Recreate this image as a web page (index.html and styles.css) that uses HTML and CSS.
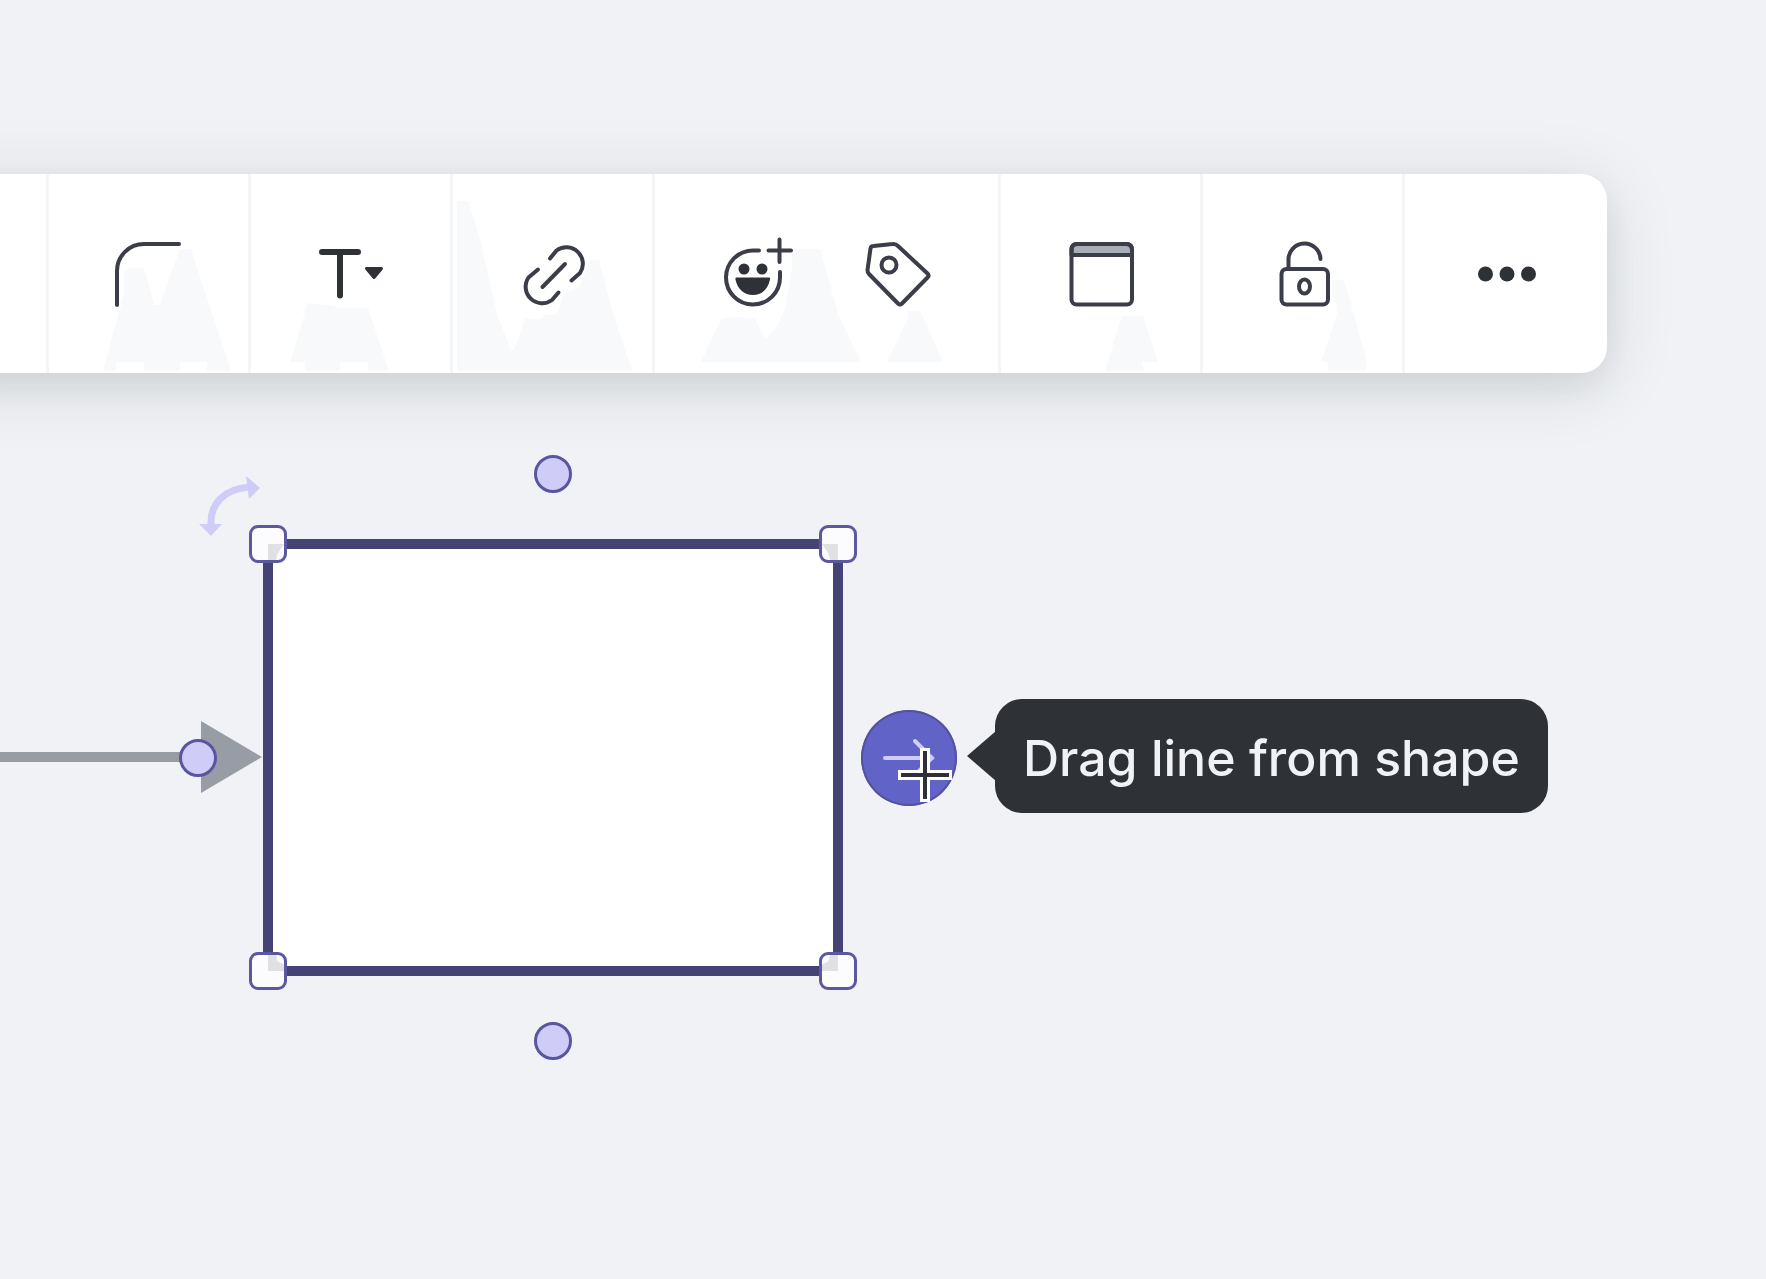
FILE: index.html
```html
<!DOCTYPE html>
<html lang="en">
<head>
    <meta charset="UTF-8">
    <meta name="viewport" content="width=device-width, initial-scale=1.0">
    <title>Drag line from shape</title>
    <link rel="stylesheet" href="styles.css">
</head>
<body>
    <div class="toolbar" role="toolbar" aria-label="Shape options">
        <svg class="toolbar-backdrop" width="1400" height="199" viewBox="0 0 1400 199" aria-hidden="true">
            <path d="M103 197L124 120V98L130 94H144L154 131H160L180 75H191L231 197H207V188H180V197H144V188H116V197Z"/>
            <path d="M290 188L308 129L335 132L336 134H368L389 197H368V188H340V197H305V188Z"/>
            <path d="M457 197V27H468L480 65L497 140L511 176H514L525 145H541L544 141H556L564 120L580 112L590 86H599L613 140L632 197Z"/>
            <path d="M701 188L721 145L737 143L755 145L766 166L778 150L785 135L792 95V75H820L838 140L861 188Z"/>
            <path d="M887 188L908 144V137H920L943 188Z"/>
            <path d="M1105 197L1121 145V142H1143L1158 188H1142L1144 197Z"/>
            <path d="M1321 188L1337 140V133L1332 120V106H1344L1367 188L1365 197H1328V188Z"/>
        </svg>

        <div class="group group-cut"></div>
        <div class="group">
            <button class="tool" type="button" aria-label="Corner radius">
                <svg class="icon" viewBox="0 0 80 80"><path d="M8 71V37A27 27 0 0 1 35 10H70"/></svg>
            </button>
        </div>
        <div class="group">
            <button class="tool" type="button" aria-label="Text">
                <svg class="icon" viewBox="0 0 80 80">
                    <path class="thick" d="M11 18H47M29 18V61.500"/>
                    <path class="solid" d="M55.500 34.500H70.500L63 43.500Z"/>
                </svg>
            </button>
        </div>
        <div class="group">
            <button class="tool" type="button" aria-label="Link">
                <svg class="icon" viewBox="0 0 80 80">
                    <path d="M37 24.500L43.500 16.500A16.500 16.500 0 0 1 67 39L58.500 46.500"/>
                    <path d="M29.500 53L52 30"/>
                    <path d="M45.500 58.500L39 66A16.500 16.500 0 0 1 15.500 43.500L25 35.500"/>
                </svg>
            </button>
        </div>
        <div class="group group-wide">
            <button class="tool" type="button" aria-label="Add emoji">
                <svg class="icon" viewBox="0 0 80 80">
                    <path d="M43 16.500H37A27 27 0 1 0 64 43.500V38"/>
                    <path d="M52.500 16.500H75M63.500 5.500V28"/>
                    <circle class="fill" cx="28" cy="35" r="5.500"/>
                    <circle class="fill" cx="46" cy="35" r="5.500"/>
                    <path class="fill" d="M20.500 43.500H53Q54.500 43.500 54 45.500C52 55.500 45.500 61 37 61S21.500 55.500 19.500 45.500Q19 43.500 20.500 43.500Z"/>
                </svg>
            </button>
            <button class="tool" type="button" aria-label="Tags">
                <svg class="icon" viewBox="0 0 80 80">
                    <path d="M15.500 12L34.500 10Q37.500 9.500 40 12L69.500 39.500Q71.500 41.500 69.500 43.500L44 69.500Q42 71.500 40 69.500L11 40Q9.500 38.500 9.500 36L12.500 14.500Q13 12 15.500 12Z"/>
                    <circle cx="31" cy="31" r="7.500"/>
                </svg>
            </button>
        </div>
        <div class="group">
            <button class="tool" type="button" aria-label="Container">
                <svg class="icon" viewBox="0 0 80 80">
                    <path class="header" d="M10.500 21V16Q10.500 10 16.500 10H65Q71 10 71 16V21Z"/>
                    <rect x="10.500" y="10" width="60.500" height="60.500" rx="5"/>
                </svg>
            </button>
        </div>
        <div class="group">
            <button class="tool" type="button" aria-label="Unlock">
                <svg class="icon" viewBox="0 0 80 80">
                    <path d="M25.500 35V26A16 16 0 0 1 57.500 25"/>
                    <rect x="18.500" y="35" width="46.500" height="35.500" rx="5"/>
                    <ellipse cx="41.500" cy="52.500" rx="5.500" ry="7"/>
                </svg>
            </button>
        </div>
        <div class="group">
            <button class="tool" type="button" aria-label="More">
                <svg class="icon" viewBox="0 0 80 80">
                    <circle class="fill" cx="19.500" cy="40" r="7.500"/>
                    <circle class="fill" cx="41" cy="40" r="7.500"/>
                    <circle class="fill" cx="62.500" cy="40" r="7.500"/>
                </svg>
            </button>
        </div>
    </div>

    <div class="canvas">
        <svg class="connector" width="263" height="80" viewBox="0 0 263 80" aria-hidden="true">
            <path d="M0 35H201V4L262 40L201 76V45H0Z"/>
        </svg>

        <div class="shape">
            <svg class="rotate" width="70" height="70" viewBox="0 0 70 70" aria-hidden="true">
                <path class="rotate-arc" d="M16 54C15 32 30 18 54 16"/>
                <path class="rotate-head" d="M51 5L65 17L54 28Z"/>
                <path class="rotate-head" d="M4 53H27L16 65Z"/>
            </svg>

            <span class="handle top-left"></span>
            <span class="handle top-right"></span>
            <span class="handle bottom-left"></span>
            <span class="handle bottom-right"></span>

            <span class="anchor anchor-top"></span>
            <span class="anchor anchor-bottom"></span>
            <span class="anchor anchor-left"></span>

            <button class="connect" type="button" aria-label="Drag line" aria-describedby="connect-tip">
                <svg width="96" height="96" viewBox="0 0 96 96">
                    <path d="M24 48H71M54 31L71 48L54 65"/>
                </svg>
            </button>
            <div class="tooltip" id="connect-tip" role="tooltip">Drag line from shape</div>

            <svg class="cursor" width="58" height="58" viewBox="0 0 58 58" aria-hidden="true">
                <path class="cursor-edge" d="M2 29H56M29 2V56"/>
                <path class="cursor-line" d="M5 29H53M29 5V53"/>
            </svg>
        </div>
    </div>
</body>
</html>
```

FILE: styles.css
```css
body {
    margin: 0;
    min-height: 100vh;
    display: flex;
    flex-direction: column;
    background-color: #f0f2f5;
    font-family: Inter, 'Open Sans', sans-serif;
    overflow: hidden;
}
button {
    padding: 0;
    border: none;
    background: none;
    cursor: pointer;
}

/* toolbar, runs off the left edge of the window */
.toolbar {
    position: relative;
    display: flex;
    height: 199px;
    margin: 174px 159px 0 -80px;
    padding-left: 80px;
    background-color: #fff;
    border-radius: 26px;
    box-shadow: 0 14px 32px rgba(45, 70, 60, 0.08), 0 12px 72px rgba(45, 50, 50, 0.12);
}
.toolbar-backdrop {
    position: absolute;
    top: 0;
    left: 80px;
    fill: #f8f9fb;
}
.group {
    position: relative;
    display: flex;
    flex: none;
    justify-content: center;
    width: 202px;
    box-sizing: border-box;
    border-right: 3px solid #f4f5f7;
}
.group:last-child {
    border-right: none;
}
.group-cut {
    flex: 1;
    width: auto;
}
.group-wide {
    width: 346px;
}
.tool {
    display: flex;
    align-items: center;
    justify-content: center;
    width: 142px;
}
.icon {
    width: 80px;
    height: 80px;
    fill: none;
    stroke: #3b3e48;
    stroke-width: 4;
    stroke-linecap: round;
    stroke-linejoin: round;
}
.icon .thick {
    stroke: #2e3236;
    stroke-width: 6;
}
.icon .solid {
    fill: #2e3236;
    stroke: #2e3236;
    stroke-width: 3;
}
.icon .fill {
    fill: #2e3236;
    stroke: none;
}
.icon .header {
    fill: #a9adb6;
}

/* canvas */
.canvas {
    position: relative;
    flex: 1;
}
.connector {
    position: absolute;
    top: 344px;
    left: 0;
    fill: #989da5;
}
.shape {
    position: absolute;
    top: 166px;
    left: 263px;
    width: 580px;
    height: 437px;
    box-sizing: border-box;
    border: 10px solid #454376;
    background-color: #fff;
}
.rotate {
    position: absolute;
    top: -78px;
    left: -78px;
}
.rotate-arc {
    fill: none;
    stroke: #cfcdf7;
    stroke-width: 7;
}
.rotate-head {
    fill: #cfcdf7;
}
.handle {
    position: absolute;
    width: 38px;
    height: 38px;
    box-sizing: border-box;
    border: 3px solid #5b58a0;
    border-radius: 9px;
    background-color: #fcfcff;
}
/* faint trace of the shape's corner under each handle */
.handle::after {
    content: '';
    position: absolute;
    width: 16px;
    height: 16px;
    background-color: #dfe1e5;
}
.top-left {
    top: -24px;
    left: -24px;
}
.top-left::after {
    right: 0;
    bottom: 0;
    clip-path: polygon(0 0, 100% 0, 60% 60%, 50% 100%, 0 100%);
}
.top-right {
    top: -24px;
    right: -24px;
}
.top-right::after {
    left: 0;
    bottom: 0;
    clip-path: polygon(0 0, 100% 0, 100% 100%, 50% 100%, 40% 60%);
}
.bottom-left {
    bottom: -24px;
    left: -24px;
}
.bottom-left::after {
    top: 0;
    right: 0;
    clip-path: polygon(0 0, 50% 0, 60% 40%, 100% 60%, 100% 100%, 0 100%);
}
.bottom-right {
    right: -24px;
    bottom: -24px;
}
.bottom-right::after {
    top: 0;
    left: 0;
    clip-path: polygon(50% 0, 100% 0, 100% 100%, 0 100%, 0 60%, 40% 40%);
}
.anchor {
    position: absolute;
    width: 38px;
    height: 38px;
    box-sizing: border-box;
    border: 3px solid #5955a3;
    border-radius: 50%;
    background-color: #cfcdf7;
}
.anchor-top {
    top: -94px;
    left: calc(50% - 19px);
}
.anchor-bottom {
    bottom: -94px;
    left: calc(50% - 19px);
}
.anchor-left {
    top: calc(50% - 19px);
    left: -94px;
}
.connect {
    position: absolute;
    top: calc(50% - 48px);
    right: -124px;
    width: 96px;
    height: 96px;
    border-radius: 50%;
    background-color: #6164c6;
    box-shadow: inset 0 0 0 2px #5452a0;
}
.connect svg {
    display: block;
    fill: none;
    stroke: #cfcdf7;
    stroke-width: 4;
    stroke-linecap: round;
}
.tooltip {
    position: absolute;
    top: calc(50% - 59px);
    left: calc(100% + 162px);
    padding: 28px 28px 24px;
    border-radius: 27px;
    background-color: #2e3236;
    color: #f0f2f5;
    font-size: 50px;
    font-weight: 500;
    line-height: 62px;
    white-space: nowrap;
}
.tooltip::before {
    content: '';
    position: absolute;
    top: 32px;
    left: -28px;
    border: 25px solid transparent;
    border-right: 29px solid #2e3236;
    border-left: none;
}
.cursor {
    position: absolute;
    top: calc(50% - 12px);
    right: -121px;
}
.cursor path {
    fill: none;
}
.cursor-edge {
    stroke: #fff;
    stroke-width: 10;
}
.cursor-line {
    stroke: #2e3236;
    stroke-width: 4;
}
```
